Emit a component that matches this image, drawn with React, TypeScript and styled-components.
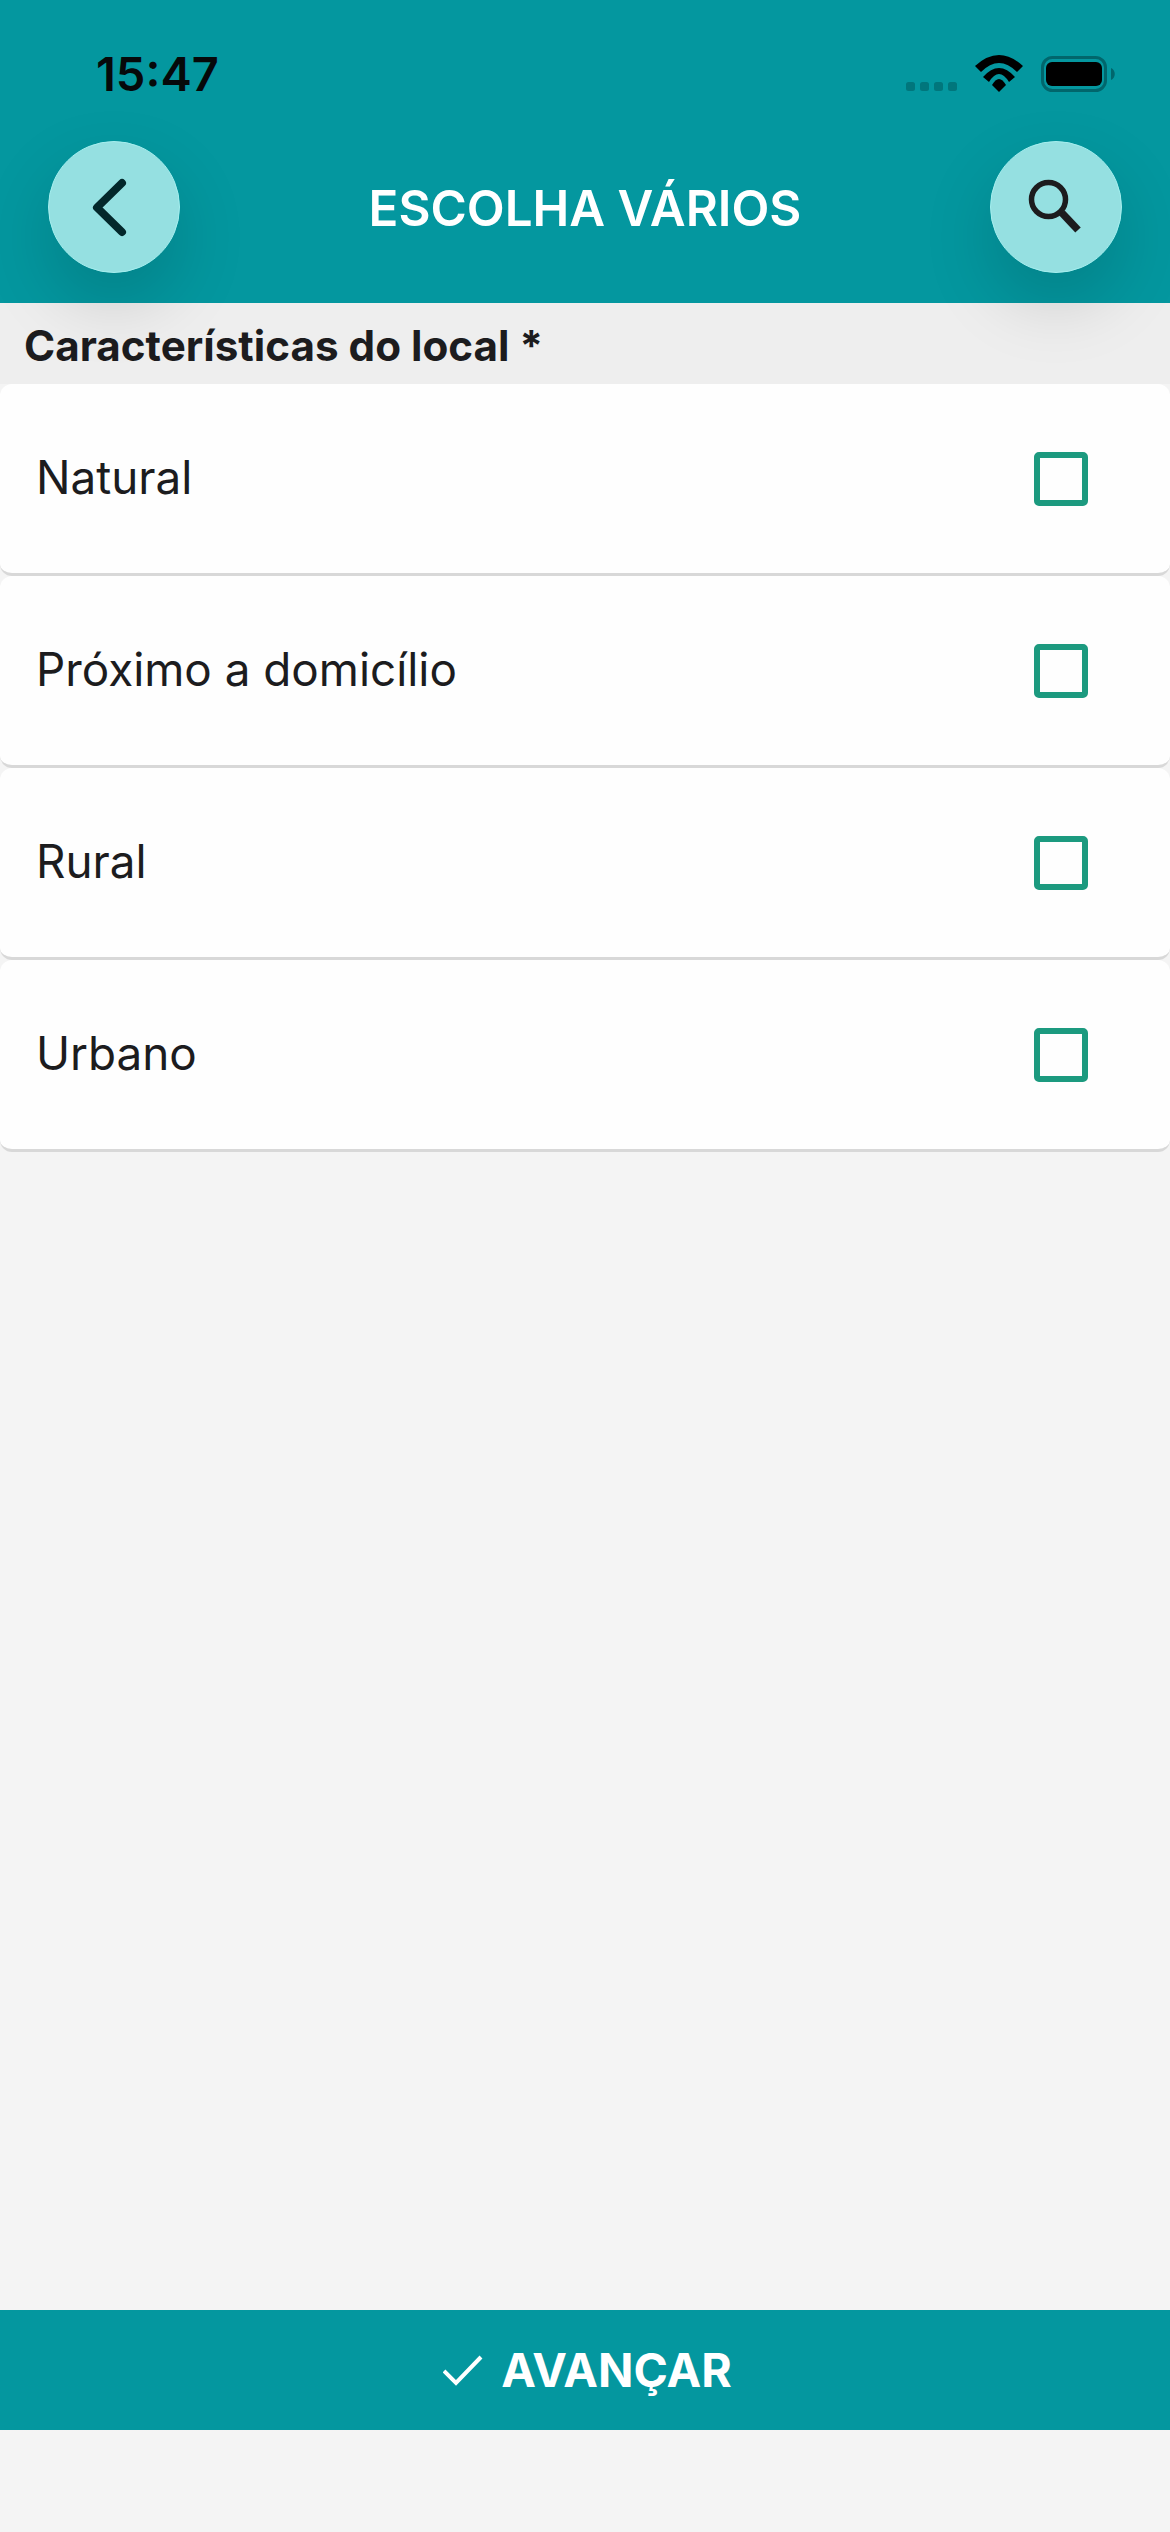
import styled, { createGlobalStyle } from 'styled-components';

const GlobalStyle = createGlobalStyle`
  html, body {
    margin: 0;
    padding: 0;
    background: #f4f4f4;
  }
  * {
    box-sizing: border-box;
  }
`;

const Page = styled.div`
  width: 1170px;
  height: 2532px;
  display: flex;
  flex-direction: column;
  background: #f4f4f4;
  font-family: Inter, 'Liberation Sans', sans-serif;
`;

const Header = styled.header`
  position: relative;
  z-index: 1;
  height: 303px;
  flex-shrink: 0;
  background: #04979f;
  display: flex;
  flex-direction: column;
`;

const StatusBar = styled.div`
  height: 141px;
  padding: 51px 54px 0 96px;
  display: flex;
  justify-content: space-between;
  align-items: flex-start;
`;

const Clock = styled.span`
  font-size: 47px;
  line-height: 46px;
  font-weight: 600;
  color: #06090a;
`;

const StatusIcons = styled.div`
  margin-top: 4px;
  display: flex;
  align-items: center;
`;

const NavRow = styled.div`
  padding: 0 48px;
  display: flex;
  justify-content: space-between;
  align-items: center;
`;

const RoundButton = styled.button`
  width: 132px;
  height: 132px;
  padding: 0;
  border: 1.5px solid #a6efef;
  border-radius: 50%;
  background: #95e0e1;
  box-shadow: 0 30px 70px rgba(0, 0, 0, 0.15);
  display: flex;
  align-items: center;
  justify-content: center;
`;

const Title = styled.h1`
  margin: 2px 0 0;
  font-size: 49.3px;
  font-weight: 600;
  color: #ffffff;
`;

const Section = styled.div`
  height: 81px;
  flex-shrink: 0;
  padding: 4px 24px 0;
  display: flex;
  align-items: center;
  background: #eeeeee;
  font-size: 42.2px;
  font-weight: 700;
  color: #1c1c1e;
`;

const List = styled.div`
  flex: 1;
  display: flex;
  flex-direction: column;
`;

const Row = styled.div`
  height: 192px;
  padding: 0 82px 0 36px;
  display: flex;
  align-items: center;
  justify-content: space-between;
  background: #fefefe;
  border-radius: 12px;
  border-bottom: 3px solid #d8d8d8;
  font-size: 45.8px;
  color: #1c1c1e;
`;

const RowLabel = styled.span`
  margin-bottom: 3px;
`;

const Checkbox = styled.span`
  width: 54px;
  height: 54px;
  border: 6px solid #1c9a7f;
  border-radius: 5px;
`;

const NextBar = styled.button`
  height: 120px;
  flex-shrink: 0;
  padding: 0 0 0 5px;
  border: none;
  background: #04979f;
  color: #ffffff;
  font-family: inherit;
  font-size: 46.5px;
  font-weight: 700;
  display: flex;
  align-items: center;
  justify-content: center;
  gap: 18px;
`;

const BottomGap = styled.div`
  height: 102px;
  flex-shrink: 0;
`;

const options = ['Natural', 'Próximo a domicílio', 'Rural', 'Urbano'];

export default function App() {
  return (
    <Page>
      <GlobalStyle />
      <Header>
        <StatusBar>
          <Clock>15:47</Clock>
          <StatusIcons>
            <svg width="210" height="38" viewBox="0 0 210 38">
              <g fill="#01767c">
                <rect x="0" y="27" width="9" height="9" rx="2.5" />
                <rect x="14" y="27" width="9" height="9" rx="2.5" />
                <rect x="28" y="27" width="9" height="9" rx="2.5" />
                <rect x="42" y="27" width="9" height="9" rx="2.5" />
              </g>
              <path d="M69 11 Q93 -11 117 11 L111 17 Q93 -1 75 17 Z" fill="#000" />
              <path d="M77 22 Q93 4 109 22 L103 27 Q93 11 83 27 Z" fill="#000" />
              <path d="M86 30 Q93 18 100 30 L93 37 Z" fill="#000" />
              <rect x="136.5" y="2.5" width="63" height="33" rx="10" fill="none" stroke="#01666c" strokeWidth="3" />
              <rect x="140" y="7" width="56" height="24" rx="6" fill="#000" />
              <path d="M205 13 C210 15 210 23 205 25 Z" fill="#01666c" />
            </svg>
          </StatusIcons>
        </StatusBar>
        <NavRow>
          <RoundButton>
            <svg width="130" height="130" viewBox="1 1 130 130">
              <path d="M74 42 L49 66.5 L74 91" fill="none" stroke="#03282b" strokeWidth="8" strokeLinecap="round" strokeLinejoin="round" />
            </svg>
          </RoundButton>
          <Title>ESCOLHA VÁRIOS</Title>
          <RoundButton>
            <svg width="130" height="130" viewBox="1 1 130 130">
              <circle cx="58.5" cy="58.5" r="17" fill="none" stroke="#1c1c1e" strokeWidth="5.5" />
              <path d="M72 72 L88 89" fill="none" stroke="#1c1c1e" strokeWidth="7.5" />
            </svg>
          </RoundButton>
        </NavRow>
      </Header>
      <Section>Características do local *</Section>
      <List>
        {options.map((option) => (
          <Row key={option}>
            <RowLabel>{option}</RowLabel>
            <Checkbox />
          </Row>
        ))}
      </List>
      <NextBar>
        <svg width="40" height="32" viewBox="0 0 40 32">
          <path d="M1 17 L13 29 L38 3" fill="none" stroke="#ffffff" strokeWidth="4" />
        </svg>
        AVANÇAR
      </NextBar>
      <BottomGap />
    </Page>
  );
}
